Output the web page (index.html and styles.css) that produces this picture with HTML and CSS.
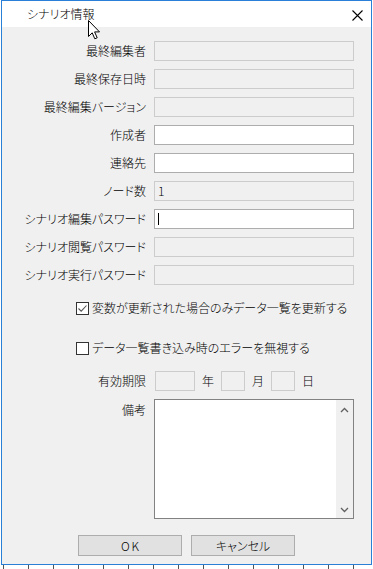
FILE: index.html
```html
<!DOCTYPE html>
<html lang="ja">
<head>
<meta charset="utf-8">
<title>シナリオ情報</title>
<link rel="stylesheet" href="styles.css">
</head>
<body>
<div class="window">
  <div class="titlebar">
    <span class="title">シナリオ情報</span>
    <svg class="close" width="11" height="11" viewBox="0 0 11 11"><path d="M0.5 0.5 L10.5 10.5 M10.5 0.5 L0.5 10.5" stroke="#000" stroke-width="1.1" fill="none"/></svg>
  </div>
  <div class="content">
    <div class="form">
      <div class="lbl">最終編集者</div><div class="field disabled"></div>
      <div class="lbl">最終保存日時</div><div class="field disabled"></div>
      <div class="lbl">最終編集バージョン</div><div class="field disabled"></div>
      <div class="lbl">作成者</div><div class="field"></div>
      <div class="lbl">連絡先</div><div class="field"></div>
      <div class="lbl">ノード数</div><div class="field disabled">1</div>
      <div class="lbl">シナリオ編集パスワード</div><div class="field"><span class="caret"></span></div>
      <div class="lbl">シナリオ閲覧パスワード</div><div class="field disabled"></div>
      <div class="lbl">シナリオ実行パスワード</div><div class="field disabled"></div>
    </div>
    <div class="checks">
      <div class="check">
        <span class="box"><svg width="11" height="11" viewBox="0 0 11 11"><path d="M1.5 5.5 L4.2 8.2 L9.5 2.5" stroke="#555" stroke-width="1.1" fill="none"/></svg></span>
        <span class="ctext">変数が更新された場合のみデータ一覧を更新する</span>
      </div>
      <div class="check">
        <span class="box"></span>
        <span class="ctext">データ一覧書き込み時のエラーを無視する</span>
      </div>
    </div>
    <div class="date-row">
      <div class="lbl">有効期限</div>
      <div class="date-fields">
        <div class="field disabled year"></div><span class="unit">年</span>
        <div class="field disabled small"></div><span class="unit">月</span>
        <div class="field disabled small"></div><span class="unit">日</span>
      </div>
    </div>
    <div class="notes-row">
      <div class="lbl top">備考</div>
      <div class="textarea">
        <div class="scrollbar">
          <svg width="9" height="6" viewBox="0 0 9 6"><path d="M1 5 L4.5 1.5 L8 5" stroke="#606060" stroke-width="1.3" fill="none"/></svg>
          <svg width="9" height="6" viewBox="0 0 9 6"><path d="M1 1 L4.5 4.5 L8 1" stroke="#606060" stroke-width="1.3" fill="none"/></svg>
        </div>
      </div>
    </div>
    <div class="buttons">
      <div class="btn ok">OK</div>
      <div class="btn">キャンセル</div>
    </div>
  </div>
</div>
<div class="edge"></div>
<svg class="cursor" width="13" height="20" viewBox="0 0 13 20"><path d="M0.5 0.5 L0.5 16.5 L4.2 12.8 L6.8 18.8 L9.2 17.8 L6.6 11.9 L11.5 11.9 Z" fill="#fff" stroke="#000" stroke-width="1" stroke-linejoin="miter"/></svg>
</body>
</html>
```
FILE: styles.css
```css
html, body {
  margin: 0;
  padding: 0;
  background: #ffffff;
}
body {
  width: 373px;
  height: 569px;
  overflow: hidden;
  position: relative;
  font-family: "Noto Sans CJK JP", "Noto Sans", sans-serif;
  font-size: 12px;
  font-weight: 300;
  font-feature-settings: "palt";
  color: #000;
}
.window {
  margin-left: 1px;
  width: 371px;
  box-sizing: border-box;
  border: 1px solid #2a80d6;
  background: #f0f0f0;
}
.titlebar {
  height: 26px;
  background: #ffffff;
  display: flex;
  align-items: center;
  justify-content: space-between;
  padding: 0 8px 0 25px;
}
.title {
  line-height: 26px;
}
.close {
  margin-top: 2px;
}
.content {
  padding: 14px 0 8px 0;
}
.form {
  display: grid;
  grid-template-columns: 144px 200px;
  column-gap: 8px;
  row-gap: 8px;
  grid-auto-rows: 20px;
}
.lbl {
  text-align: right;
  line-height: 20px;
  white-space: nowrap;
}
.lbl.top {
  line-height: 18px;
  padding-top: 2px;
}
.field {
  box-sizing: border-box;
  height: 20px;
  border: 1px solid #adadad;
  background: #ffffff;
  line-height: 18px;
  padding-left: 3px;
  display: flex;
  align-items: center;
}
.field.disabled {
  background: #f0f0f0;
  border-color: #cccccc;
}
.caret {
  display: block;
  width: 1px;
  height: 12px;
  background: #000;
}
.checks {
  margin-top: 13px;
  padding-left: 74px;
  display: flex;
  flex-direction: column;
  gap: 20px;
}
.check {
  height: 20px;
  display: flex;
  align-items: center;
  gap: 3px;
}
.box {
  box-sizing: border-box;
  width: 13px;
  height: 13px;
  border: 1px solid #333333;
  background: #ffffff;
  display: flex;
  align-items: center;
  justify-content: center;
}
.ctext {
  line-height: 20px;
  white-space: nowrap;
}
.date-row {
  margin-top: 13px;
  display: grid;
  grid-template-columns: 144px auto;
  column-gap: 8px;
  height: 20px;
}
.date-fields {
  display: flex;
  align-items: center;
  gap: 7px;
  padding-left: 1px;
}
.field.year {
  width: 40px;
}
.field.small {
  width: 24px;
}
.unit {
  line-height: 20px;
}
.notes-row {
  margin-top: 8px;
  display: grid;
  grid-template-columns: 144px 200px;
  column-gap: 8px;
}
.textarea {
  box-sizing: border-box;
  height: 120px;
  border: 1px solid #828282;
  background: #ffffff;
  display: flex;
  justify-content: flex-end;
}
.scrollbar {
  width: 17px;
  background: #f0f0f0;
  display: flex;
  flex-direction: column;
  justify-content: space-between;
  align-items: center;
  padding: 7px 0 5px;
}
.buttons {
  margin-top: 16px;
  display: flex;
  justify-content: center;
  gap: 9px;
}
.btn {
  box-sizing: border-box;
  width: 104px;
  height: 21px;
  border: 1px solid #adadad;
  background: #e1e1e1;
  text-align: center;
  line-height: 19px;
}
.btn.ok {
  letter-spacing: 2px;
  text-indent: 2px;
}
.edge {
  height: 4px;
  background-color: #ffffff;
  background-image: repeating-linear-gradient(to right, #555555 0 1px, transparent 1px 25px);
  background-position: 3px 0;
}
.cursor {
  position: absolute;
  left: 88px;
  top: 20px;
}
```
